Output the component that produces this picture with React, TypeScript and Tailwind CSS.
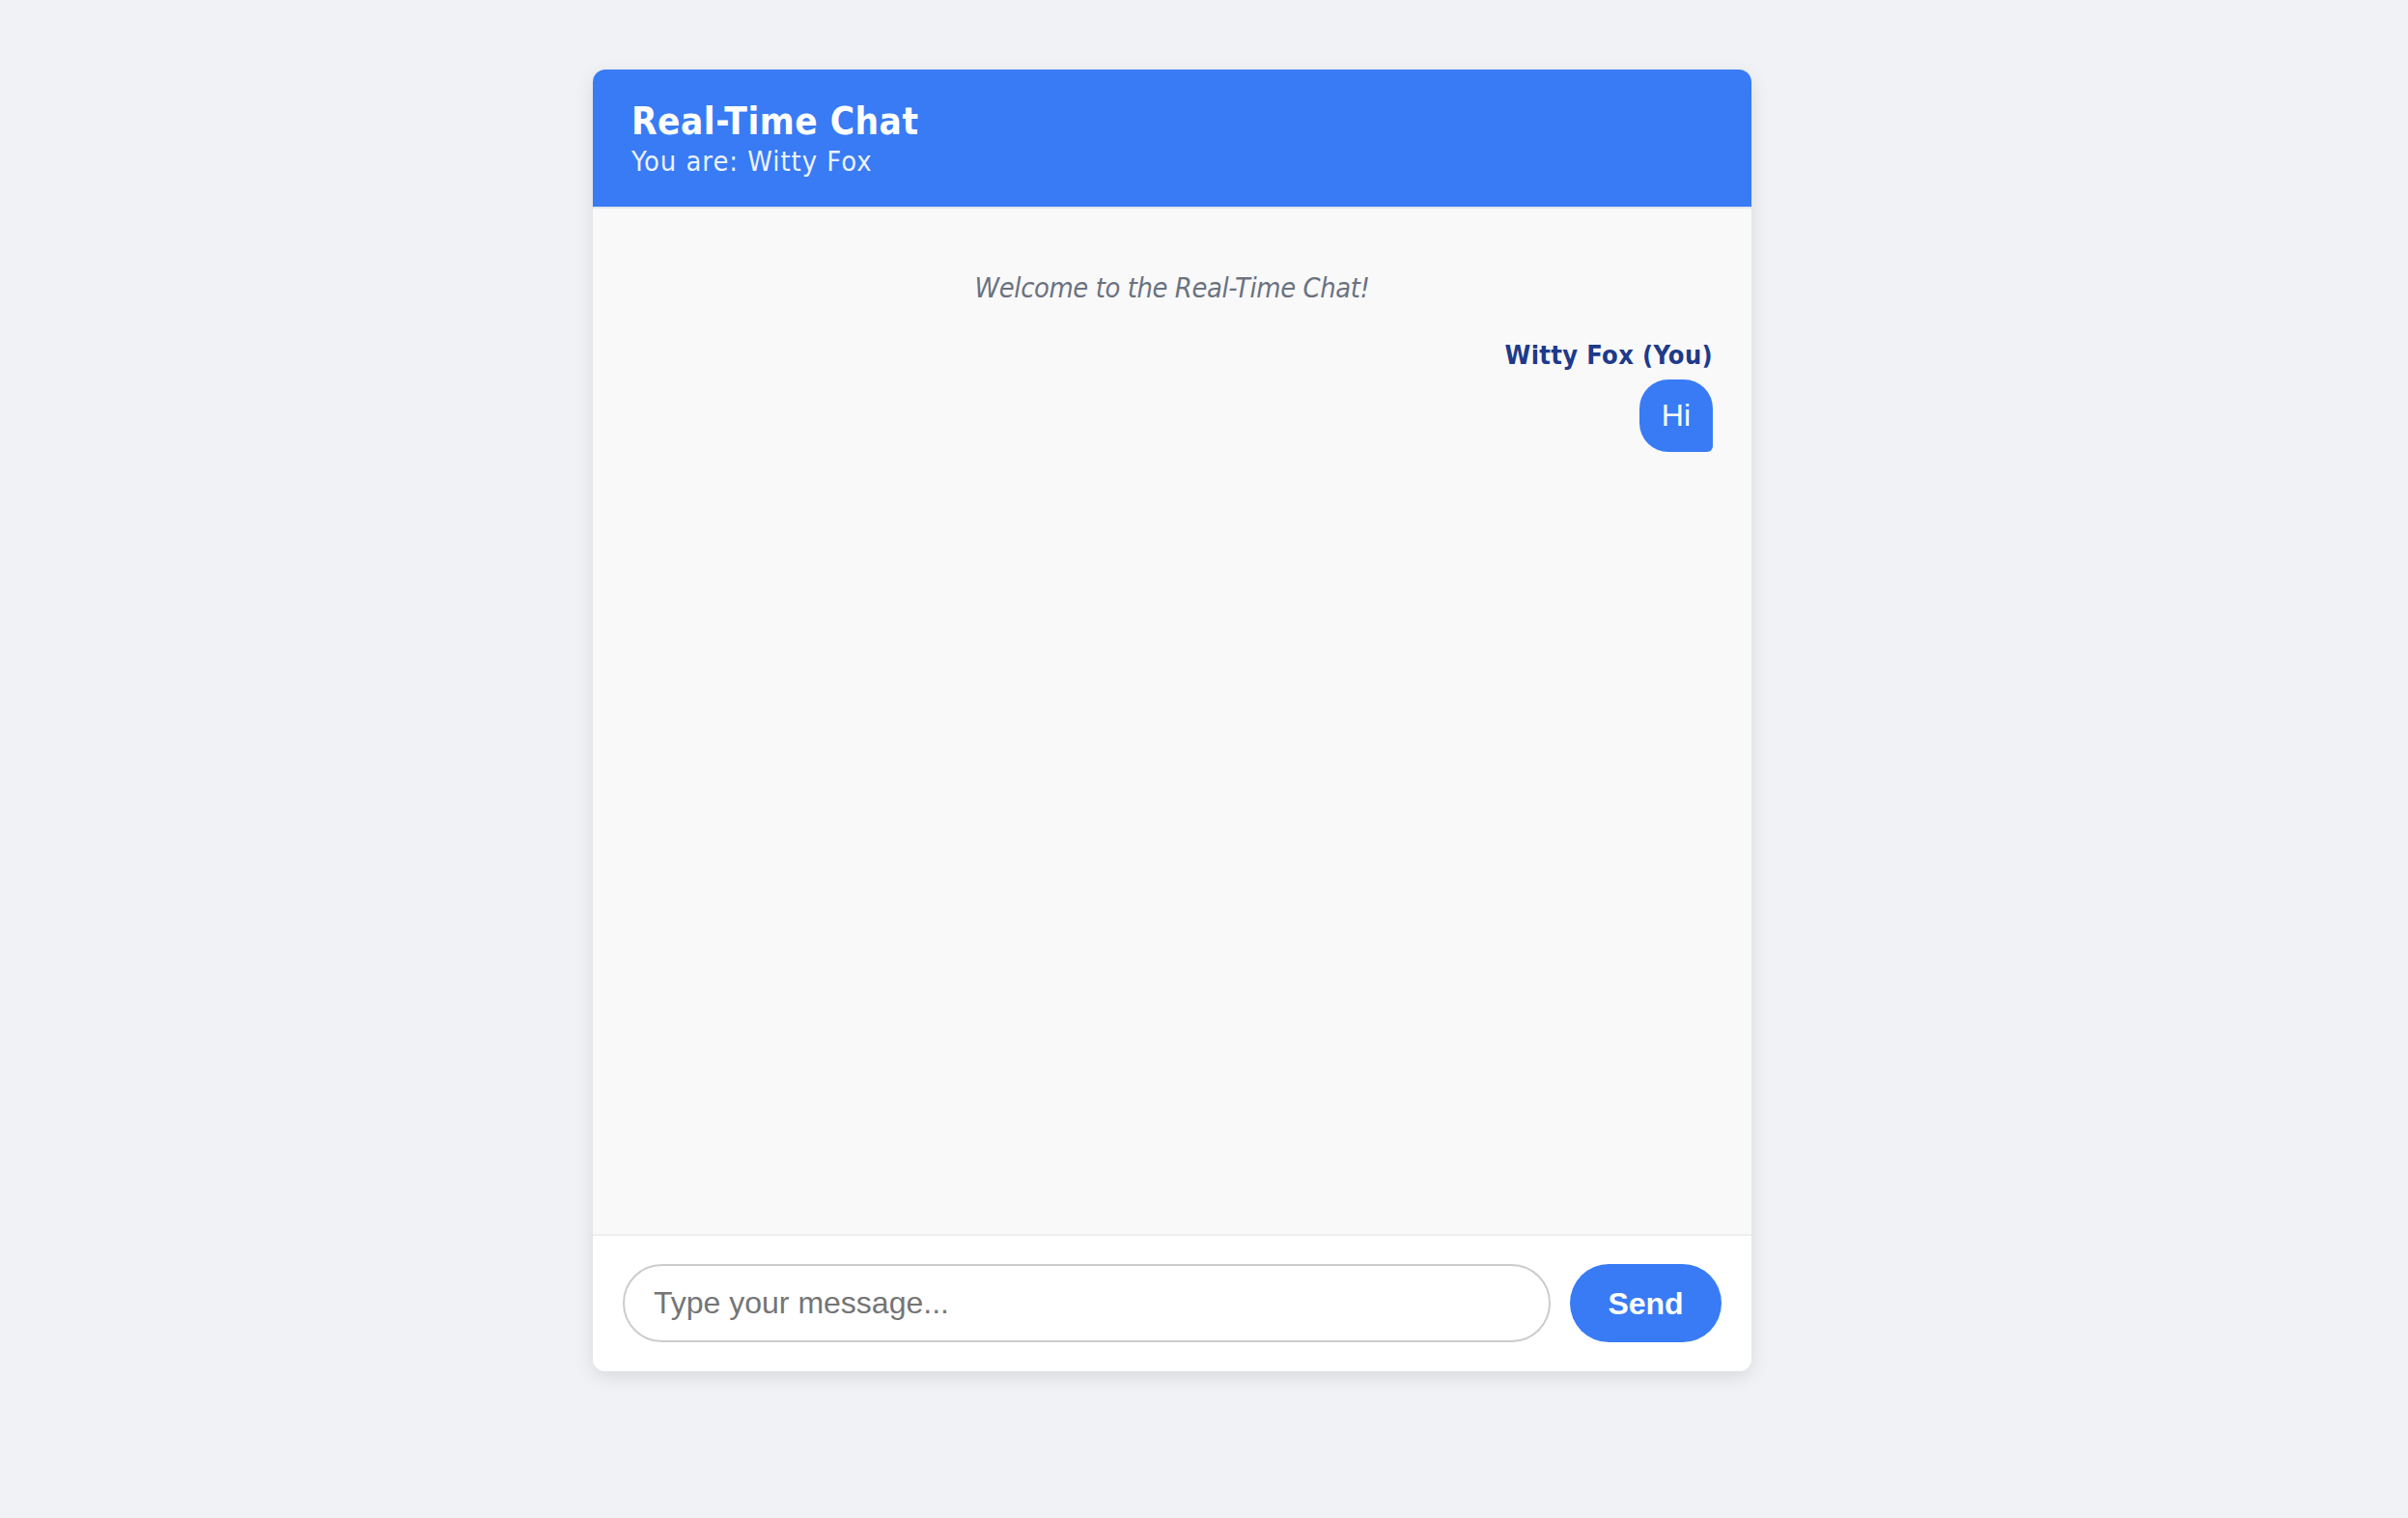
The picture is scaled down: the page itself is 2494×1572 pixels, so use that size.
import React, { useState } from 'react';

const tahoma = { fontFamily: '"DejaVu Sans Condensed", "DejaVu Sans", Verdana, sans-serif' };
const arial = { fontFamily: '"Liberation Sans", Arial, sans-serif' };

export default function App() {
  const [text, setText] = useState('');

  return (
    <div className="h-screen w-full overflow-hidden bg-[#f0f2f5] pt-[72px]">
      <div className="ml-[614px] flex h-[1348px] w-[1200px] flex-col overflow-hidden rounded-[13px] bg-white shadow-[0_6px_20px_rgba(0,0,0,0.1)]">
        {/* Header */}
        <div className="border-b-2 border-[#e5e7eb] bg-[#387bf5] px-[40px] pt-[32px] pb-[30px] text-white" style={tahoma}>
          <h1 className="m-0 text-[38.4px] font-bold leading-[44px] tracking-[0.5px]">Real-Time Chat</h1>
          <div className="mt-[2px] text-[28.8px] leading-[34px] tracking-[1px] opacity-90">You are: Witty Fox</div>
        </div>

        {/* Messages */}
        <div className="flex flex-1 flex-col bg-[#f9f9f9] px-[40px] pt-[62px]">
          <div className="text-center text-[28.8px] italic leading-[40px] tracking-[-0.4px] text-[#6b7280]" style={tahoma}>
            Welcome to the Real-Time Chat!
          </div>

          <div className="mt-[34px] flex flex-col items-end">
            <div className="text-[27px] font-bold leading-[32px] tracking-[0.35px] text-[#1e3a8a]" style={tahoma}>
              Witty Fox (You)
            </div>
            <div
              className="mt-[9px] rounded-[30px] rounded-br-[6px] bg-[#387bf5] px-[23px] py-[18px] text-[32px] leading-[39px] text-white"
              style={arial}
            >
              Hi
            </div>
          </div>
        </div>

        {/* Input row */}
        <div className="flex items-center gap-[20px] border-t-2 border-[#eeeeee] bg-white px-[31px] pt-[29px] pb-[30px]" style={arial}>
          <input
            value={text}
            onChange={(e) => setText(e.target.value)}
            placeholder="Type your message..."
            className="h-[81px] flex-1 rounded-full border-2 border-[#cccccc] px-[30px] text-[32px] text-[#333] outline-none placeholder:text-[#757575]"
          />
          <button className="h-[81px] w-[157px] rounded-full bg-[#387bf5] text-[32px] font-bold text-white">
            Send
          </button>
        </div>
      </div>
    </div>
  );
}
